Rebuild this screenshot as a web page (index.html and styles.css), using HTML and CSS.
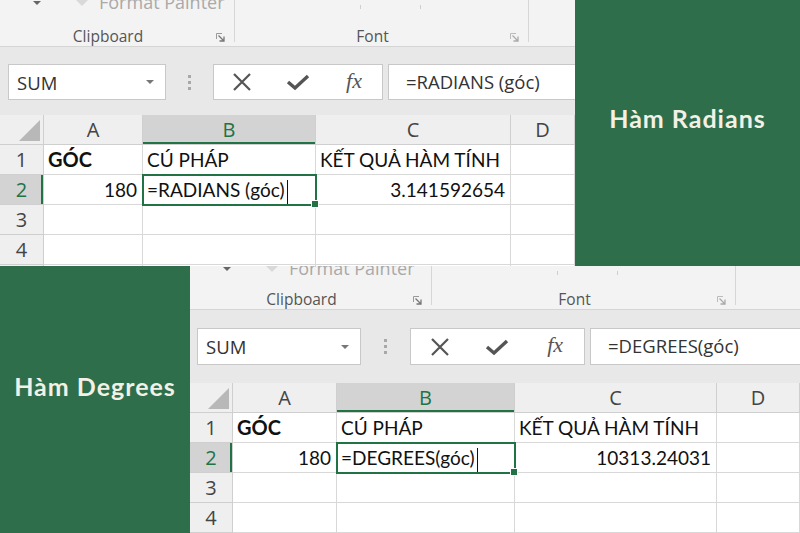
FILE: index.html
```html
<!DOCTYPE html>
<html lang="vi">
<head>
  <meta charset="UTF-8">
  <title>Hàm Radians và Hàm Degrees trong Excel</title>
  <meta name="viewport" content="width=device-width, initial-scale=1.0">
  <link rel="stylesheet" href="styles.css">
</head>
<body>
  <div class="collage">

    <section class="sheet sheet-top">
      <div class="ribbon">
        <div class="group group-clipboard">
          <div class="group-top">
            <span class="caret"></span>
            <svg class="brush" width="20" height="10" viewBox="0 0 20 10"><path d="M2 0 L9 7 L16 0 Z" fill="#d9d9d9"/></svg>
            <span class="painter">Format Painter</span>
          </div>
          <div class="group-label">
            <span>Clipboard</span>
            <svg class="launcher" width="9" height="9" viewBox="0 0 9 9"><path d="M0.5 6V0.5H6" fill="none" stroke="#999"/><path d="M2.5 2.5L7.5 7.5M8 3.5V8H3.5" fill="none" stroke="#777" stroke-width="1.3"/></svg>
          </div>
        </div>
        <div class="group group-font">
          <div class="group-top"><span class="combo"></span></div>
          <div class="group-label">
            <span>Font</span>
            <svg class="launcher" width="9" height="9" viewBox="0 0 9 9"><path d="M0.5 6V0.5H6" fill="none" stroke="#bbb"/><path d="M2.5 2.5L7.5 7.5M8 3.5V8H3.5" fill="none" stroke="#aaa" stroke-width="1.3"/></svg>
          </div>
        </div>
      </div>

      <div class="formula-bar">
        <div class="name-box"><span>SUM</span><span class="caret dark"></span></div>
        <div class="grip"><i></i><i></i><i></i></div>
        <div class="fx-buttons">
          <svg width="20" height="20" viewBox="0 0 20 20"><path d="M2 2L18 18M18 2L2 18" stroke="#555" stroke-width="2.2"/></svg>
          <svg width="24" height="20" viewBox="0 0 24 20"><path d="M2 10L9 16L22 4" fill="none" stroke="#555" stroke-width="3.4"/></svg>
          <span class="fx">fx</span>
        </div>
        <div class="formula-input">=RADIANS (góc)</div>
      </div>

      <div class="cells">
        <div class="head corner"><span class="corner-mark"></span></div>
        <div class="head">A</div>
        <div class="head selected-col">B</div>
        <div class="head">C</div>
        <div class="head">D</div>

        <div class="head row">1</div>
        <div class="cell bold">GÓC</div>
        <div class="cell">CÚ PHÁP</div>
        <div class="cell">KẾT QUẢ HÀM TÍNH</div>
        <div class="cell"></div>

        <div class="head row selected-row">2</div>
        <div class="cell num">180</div>
        <div class="cell active">=RADIANS (góc)<span class="text-cursor"></span></div>
        <div class="cell num">3.141592654</div>
        <div class="cell"></div>

        <div class="head row">3</div>
        <div class="cell"></div>
        <div class="cell"></div>
        <div class="cell"></div>
        <div class="cell"></div>

        <div class="head row">4</div>
        <div class="cell"></div>
        <div class="cell"></div>
        <div class="cell"></div>
        <div class="cell"></div>

        <div class="head row">5</div>
        <div class="cell"></div>
        <div class="cell"></div>
        <div class="cell"></div>
        <div class="cell"></div>
      </div>
    </section>

    <div class="caption caption-right">Hàm Radians</div>
    <div class="caption caption-left">Hàm Degrees</div>

    <section class="sheet sheet-bottom">
      <div class="ribbon">
        <div class="group group-clipboard">
          <div class="group-top">
            <span class="caret"></span>
            <svg class="brush" width="20" height="10" viewBox="0 0 20 10"><path d="M2 0 L9 7 L16 0 Z" fill="#d9d9d9"/></svg>
            <span class="painter">Format Painter</span>
          </div>
          <div class="group-label">
            <span>Clipboard</span>
            <svg class="launcher" width="9" height="9" viewBox="0 0 9 9"><path d="M0.5 6V0.5H6" fill="none" stroke="#999"/><path d="M2.5 2.5L7.5 7.5M8 3.5V8H3.5" fill="none" stroke="#777" stroke-width="1.3"/></svg>
          </div>
        </div>
        <div class="group group-font">
          <div class="group-top"><span class="combo"></span></div>
          <div class="group-label">
            <span>Font</span>
            <svg class="launcher" width="9" height="9" viewBox="0 0 9 9"><path d="M0.5 6V0.5H6" fill="none" stroke="#bbb"/><path d="M2.5 2.5L7.5 7.5M8 3.5V8H3.5" fill="none" stroke="#aaa" stroke-width="1.3"/></svg>
          </div>
        </div>
      </div>

      <div class="formula-bar">
        <div class="name-box"><span>SUM</span><span class="caret dark"></span></div>
        <div class="grip"><i></i><i></i><i></i></div>
        <div class="fx-buttons">
          <svg width="20" height="20" viewBox="0 0 20 20"><path d="M2 2L18 18M18 2L2 18" stroke="#555" stroke-width="2.2"/></svg>
          <svg width="24" height="20" viewBox="0 0 24 20"><path d="M2 10L9 16L22 4" fill="none" stroke="#555" stroke-width="3.4"/></svg>
          <span class="fx">fx</span>
        </div>
        <div class="formula-input">=DEGREES(góc)</div>
      </div>

      <div class="cells">
        <div class="head corner"><span class="corner-mark"></span></div>
        <div class="head">A</div>
        <div class="head selected-col">B</div>
        <div class="head">C</div>
        <div class="head">D</div>

        <div class="head row">1</div>
        <div class="cell bold">GÓC</div>
        <div class="cell">CÚ PHÁP</div>
        <div class="cell">KẾT QUẢ HÀM TÍNH</div>
        <div class="cell"></div>

        <div class="head row selected-row">2</div>
        <div class="cell num">180</div>
        <div class="cell active">=DEGREES(góc)<span class="text-cursor"></span></div>
        <div class="cell num">10313.24031</div>
        <div class="cell"></div>

        <div class="head row">3</div>
        <div class="cell"></div>
        <div class="cell"></div>
        <div class="cell"></div>
        <div class="cell"></div>

        <div class="head row">4</div>
        <div class="cell"></div>
        <div class="cell"></div>
        <div class="cell"></div>
        <div class="cell"></div>
      </div>
    </section>

  </div>
</body>
</html>
```

FILE: styles.css
```css
* {
  box-sizing: border-box;
}

body {
  margin: 0;
  width: 800px;
  height: 533px;
  overflow: hidden;
  background: #2e6e4b;
  font-family: "Open Sans", sans-serif;
}

.collage {
  display: grid;
  grid-template-columns: 190px 385px 225px;
  grid-template-rows: 266px 267px;
}

/* green captions */
.caption {
  color: #f3f0e6;
  font: bold 25px "Lato", sans-serif;
  letter-spacing: 1px;
  text-align: center;
}

.caption-right {
  grid-column: 3;
  grid-row: 1;
  padding-top: 103px;
}

.caption-left {
  grid-column: 1;
  grid-row: 2;
  padding-top: 105px;
}

/* excel window */
.sheet {
  overflow: hidden;
  display: flex;
  flex-direction: column;
  background: #e8e8e8;
}

.sheet-top {
  grid-column: 1 / 3;
  grid-row: 1;
  --ribbon-h: 47px;
  --grp-h: 42px;
  --grp1: 235px;
  --grp2: 294px;
  --bar-h: 68px;
  --bar-pad: 17px;
  --box-h: 36px;
  --nb-left: 8px;
  --nb-w: 158px;
  --grip-w: 47px;
  --btn-w: 170px;
  --c0: 44px;
  --ca: 99px;
  --cb: 173px;
  --cc: 195px;
}

.sheet-bottom {
  grid-column: 2 / 4;
  grid-row: 2;
  --ribbon-h: 44px;
  --grp-h: 39px;
  --grp1: 242px;
  --grp2: 304px;
  --bar-h: 73px;
  --bar-pad: 18px;
  --box-h: 37px;
  --nb-left: 7px;
  --nb-w: 164px;
  --grip-w: 49px;
  --btn-w: 175px;
  --c0: 43px;
  --ca: 104px;
  --cb: 178px;
  --cc: 202px;
}

/* ribbon */
.ribbon {
  flex: none;
  height: var(--ribbon-h);
  display: flex;
  background: #f3f3f3;
  border-bottom: 1px solid #d5d5d5;
}

.group {
  height: var(--grp-h);
  display: flex;
  flex-direction: column;
  justify-content: space-between;
  border-right: 1px solid #d6d6d6;
}

.group-clipboard {
  width: var(--grp1);
}

.group-font {
  width: var(--grp2);
}

.group-top {
  height: 9px;
  overflow: hidden;
  display: flex;
  align-items: flex-end;
}

.caret {
  width: 0;
  height: 0;
  border-left: 4px solid transparent;
  border-right: 4px solid transparent;
  border-top: 4px solid #666;
  margin: 0 0 4px 33px;
}

.caret.dark {
  margin: 0;
  border-top-color: #777;
}

.brush {
  margin: 0 6px 0 32px;
}

.painter {
  color: #a9a9a9;
  font-size: 18px;
  line-height: 22px;
  margin-bottom: -4px;
}

.combo {
  width: 61px;
  height: 4px;
  margin-left: 125px;
  border-left: 1px solid #cfcfcf;
  border-right: 1px solid #cfcfcf;
}

.group-label {
  display: grid;
  grid-template-columns: 1fr auto;
  align-items: center;
  line-height: 22px;
  margin-bottom: -5px;
  padding-right: 9px;
  color: #555;
  font-size: 15.5px;
}

.group-label span {
  text-align: center;
}

.launcher {
  margin-top: 2px;
}

/* formula bar */
.formula-bar {
  flex: none;
  height: var(--bar-h);
  display: flex;
  align-items: flex-start;
  padding: var(--bar-pad) 0 0 var(--nb-left);
}

.name-box,
.fx-buttons,
.formula-input {
  height: var(--box-h);
  background: #fff;
  border: 1px solid #c8c8c8;
}

.name-box {
  width: var(--nb-w);
  display: flex;
  align-items: center;
  justify-content: space-between;
  padding: 0 11px 0 8px;
  font-size: 18.5px;
  color: #333;
}

.grip {
  width: var(--grip-w);
  height: var(--box-h);
  display: flex;
  flex-direction: column;
  align-items: center;
  justify-content: center;
  gap: 3px;
}

.grip i {
  width: 3px;
  height: 3px;
  background: #a8a8a8;
}

.fx-buttons {
  width: var(--btn-w);
  display: grid;
  grid-template-columns: 1fr 1fr 1fr;
  align-items: center;
  justify-items: center;
}

.fx {
  font: italic 22px "Liberation Serif", serif;
  color: #555;
  margin-top: -3px;
}

.formula-input {
  flex: 1;
  margin-left: 5px;
  border-right: none;
  padding-left: 17px;
  font-size: 18.5px;
  line-height: 33px;
  color: #333;
  white-space: nowrap;
}

/* worksheet */
.cells {
  flex: 1;
  display: grid;
  grid-template-columns: var(--c0) var(--ca) var(--cb) var(--cc) 1fr;
  grid-auto-rows: 30px;
  background: #fff;
}

.head {
  background: #efefef;
  border-right: 1px solid #cfcfcf;
  border-bottom: 1px solid #cfcfcf;
  color: #444;
  font-size: 20px;
  line-height: 29px;
  text-align: center;
}

.corner {
  display: flex;
  justify-content: flex-end;
  align-items: flex-end;
  padding: 0 3px 3px 0;
}

.corner-mark {
  width: 0;
  height: 0;
  border-left: 21px solid transparent;
  border-bottom: 21px solid #b8b8b8;
}

.selected-col {
  background: #d3d3d3;
  color: #217346;
  box-shadow: inset 0 -2px 0 #217346;
}

.selected-row {
  background: #d3d3d3;
  color: #217346;
  box-shadow: inset -2px 0 0 #217346;
}

.cell {
  position: relative;
  border-right: 1px solid #d8d8d8;
  border-bottom: 1px solid #d8d8d8;
  padding: 0 4px;
  font: 19px "Lato", sans-serif;
  line-height: 29px;
  color: #111;
  white-space: nowrap;
}

.cell.bold {
  font-weight: bold;
  font-size: 20px;
}

.cell.num {
  text-align: right;
  padding-right: 5px;
}

.cell.active {
  outline: 2px solid #217346;
  outline-offset: -1px;
  z-index: 1;
}

.cell.active::after {
  content: "";
  position: absolute;
  right: -4px;
  bottom: -4px;
  width: 6px;
  height: 6px;
  background: #217346;
  border: 1px solid #fff;
}

.text-cursor {
  display: inline-block;
  width: 1px;
  height: 25px;
  margin-left: 2px;
  vertical-align: middle;
  background: #111;
}
```
